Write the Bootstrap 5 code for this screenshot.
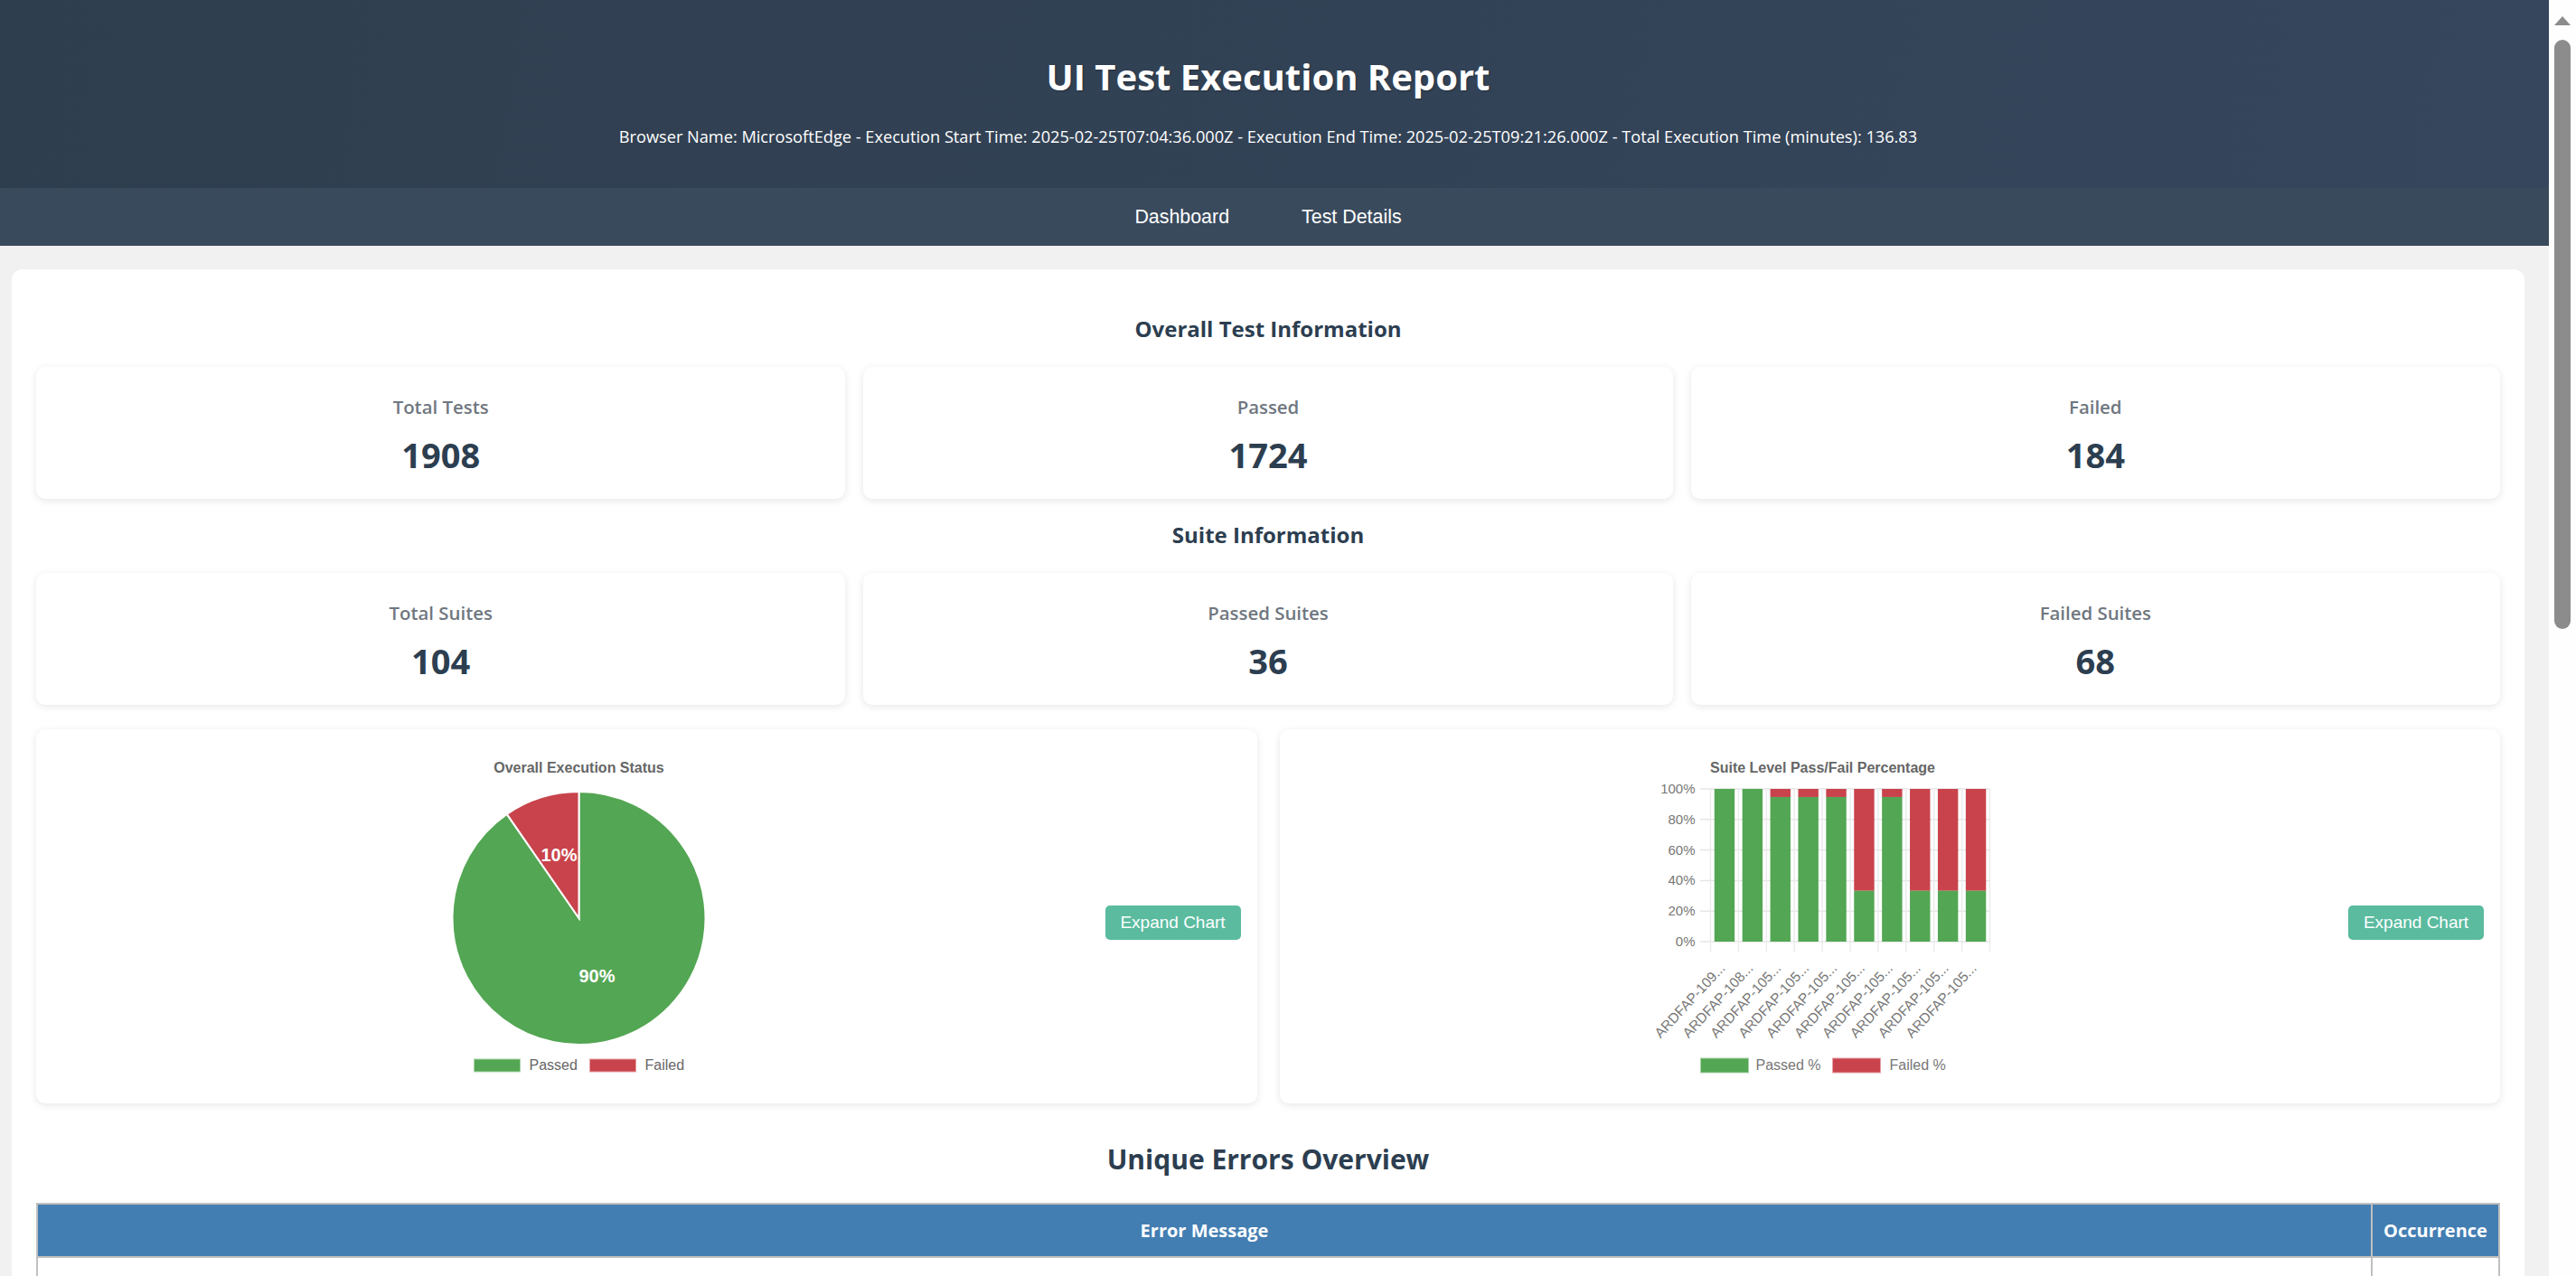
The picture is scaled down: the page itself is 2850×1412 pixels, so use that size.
<!DOCTYPE html>
<html lang="en">
<head>
    <meta charset="UTF-8">
    <meta name="viewport" content="width=device-width, initial-scale=1.0">
    <title>UI Test Execution Report</title>
    <link rel="stylesheet" href="https://cdn.jsdelivr.net/npm/bootstrap@5.3.2/dist/css/bootstrap.min.css">
    <style>
        body {
            background: #f1f1f1;
            font-family: "Open Sans", "Liberation Sans", sans-serif;
            color: #2c3e50;
        }

        .report-head {
            background: linear-gradient(100deg, #2f3e4e, #35465d);
            height: 208px;
            padding: 60px 14px 0 0;
            color: #fff;
        }

        .report-head h1 {
            font-size: 40px;
            font-weight: 700;
            line-height: 50px;
            margin: 0;
            text-shadow: 1px 1px 2px rgba(0, 0, 0, .3);
        }

        .report-head p {
            font-size: 18.2px;
            line-height: 26px;
            margin: 28px 0 0;
        }

        .report-nav {
            background: #394a5d;
            height: 64px;
            padding-right: 14px;
        }

        .report-nav a {
            color: #fff;
            font-family: "Liberation Sans", sans-serif;
            font-size: 21.4px;
            padding: 0 40px;
            text-decoration: none;
        }

        .panel {
            background: #fff;
            border-radius: 12px;
            margin: 26px 27px 0 13px;
            padding: 50px 27px 0;
        }

        .sec-title {
            font-size: 24px;
            font-weight: 700;
            line-height: 32px;
            margin-bottom: 26px;
            text-align: center;
        }

        .gutter-20 {
            --bs-gutter-x: 20px;
        }

        .chart-row {
            --bs-gutter-x: 25px;
            margin-top: 27px;
        }

        .stat-card {
            border: 0;
            border-radius: 10px;
            box-shadow: 0 2px 8px rgba(0, 0, 0, .1);
            padding: 30px 0 26px;
            text-align: center;
        }

        .stat-label {
            color: #6f7780;
            font-size: 20.4px;
            font-weight: 600;
            line-height: 28px;
        }

        .stat-num {
            font-size: 38px;
            font-weight: 700;
            line-height: 46px;
            margin-top: 16px;
        }

        .chart-card {
            border: 0;
            border-radius: 10px;
            box-shadow: 0 2px 8px rgba(0, 0, 0, .1);
            height: 414px;
            padding: 0 18px;
        }

        .chart-card svg {
            font-family: "Liberation Sans", sans-serif;
        }

        .expand-btn {
            background: #5abb9f;
            border: 0;
            border-radius: 5px;
            color: #fff;
            font-family: "Liberation Sans", sans-serif;
            font-size: 19px;
            height: 38px;
            margin-top: 14px;
            padding: 0;
            width: 150px;
        }

        .err-title {
            font-size: 30px;
            font-weight: 700;
            line-height: 40px;
            margin: 42px 0 28px;
            text-align: center;
        }

        .err-table th, .err-table td {
            border: 2px solid #c0c0c0;
        }

        .err-table thead th {
            background: #437eb2;
            color: #fff;
            font-size: 20px;
            font-weight: 700;
            height: 59px;
            padding: 0 10px;
            text-align: center;
            vertical-align: middle;
        }

        .err-table td {
            height: 80px;
        }

        .fake-scroll {
            background: #fefefe;
            flex: 0 0 30px;
            padding: 18px 6px 0;
        }

        .scroll-arrow {
            border-bottom: 10px solid #8c8c8c;
            border-left: 9px solid transparent;
            border-right: 9px solid transparent;
            height: 0;
            width: 18px;
        }

        .scroll-thumb {
            background: #8c8c8c;
            border-radius: 9px;
            height: 652px;
            margin-top: 16px;
        }
    </style>
</head>
<body class="d-flex vh-100 overflow-hidden m-0">
    <div class="flex-grow-1 overflow-hidden">
        <div class="report-head text-center">
            <h1>UI Test Execution Report</h1>
            <p>Browser Name: MicrosoftEdge - Execution Start Time: 2025-02-25T07:04:36.000Z - Execution End Time: 2025-02-25T09:21:26.000Z - Total Execution Time (minutes): 136.83</p>
        </div>
        <nav class="report-nav d-flex align-items-center justify-content-center">
            <a href="#">Dashboard</a>
            <a href="#">Test Details</a>
        </nav>

        <div class="panel">
            <div class="sec-title">Overall Test Information</div>
            <div class="row gutter-20">
                <div class="col-4"><div class="card stat-card"><div class="stat-label">Total Tests</div><div class="stat-num">1908</div></div></div>
                <div class="col-4"><div class="card stat-card"><div class="stat-label">Passed</div><div class="stat-num">1724</div></div></div>
                <div class="col-4"><div class="card stat-card"><div class="stat-label">Failed</div><div class="stat-num">184</div></div></div>
            </div>
            <div class="sec-title mt-4">Suite Information</div>
            <div class="row gutter-20">
                <div class="col-4"><div class="card stat-card"><div class="stat-label">Total Suites</div><div class="stat-num">104</div></div></div>
                <div class="col-4"><div class="card stat-card"><div class="stat-label">Passed Suites</div><div class="stat-num">36</div></div></div>
                <div class="col-4"><div class="card stat-card"><div class="stat-label">Failed Suites</div><div class="stat-num">68</div></div></div>
            </div>

            <div class="row chart-row">
                <div class="col-6">
                    <div class="card chart-card flex-row align-items-center">
                        <div class="flex-grow-1 d-flex justify-content-center">
                            <svg width="400" height="414" viewBox="0 0 400 414">
                                <text x="200.5" y="48" text-anchor="middle" font-size="16" font-weight="700" fill="#666">Overall Execution Status</text>
                                <path d="M200.5 209 L200.5 69 A140 140 0 1 1 120.8 93.9 Z" fill="#53a653" stroke="#fff" stroke-width="2"/>
                                <path d="M200.5 209 L120.8 93.9 A140 140 0 0 1 200.5 69 Z" fill="#c9434c" stroke="#fff" stroke-width="2"/>
                                <text x="178.5" y="146" text-anchor="middle" font-size="20" font-weight="700" fill="#fff">10%</text>
                                <text x="220.5" y="280" text-anchor="middle" font-size="20" font-weight="700" fill="#fff">90%</text>
                                <rect x="84.5" y="365" width="51" height="14" fill="#53a653" stroke="#a9d3a9"/>
                                <text x="145.5" y="377" font-size="16" fill="#666">Passed</text>
                                <rect x="212.5" y="365" width="51" height="14" fill="#c9434c" stroke="#e4a1a5"/>
                                <text x="273.5" y="377" font-size="16" fill="#666">Failed</text>
                            </svg>
                        </div>
                        <button class="btn expand-btn">Expand Chart</button>
                    </div>
                </div>
                <div class="col-6">
                    <div class="card chart-card flex-row align-items-center">
                        <div class="flex-grow-1 d-flex justify-content-center">
                            <svg id="suite-chart" width="400" height="414" viewBox="0 0 400 414"></svg>
                        </div>
                        <button class="btn expand-btn">Expand Chart</button>
                    </div>
                </div>
            </div>

            <div class="err-title">Unique Errors Overview</div>
            <table class="table err-table">
                <thead>
                    <tr><th>Error Message</th><th style="width: 141px">Occurrence</th></tr>
                </thead>
                <tbody>
                    <tr><td></td><td></td></tr>
                </tbody>
            </table>
        </div>
    </div>
    <div class="fake-scroll">
        <div class="scroll-arrow"></div>
        <div class="scroll-thumb"></div>
    </div>

    <script src="https://cdn.jsdelivr.net/npm/bootstrap@5.3.2/dist/js/bootstrap.bundle.min.js"></script>
    <script>
        // suite level stacked bars
        const suites = [
            ['ARDFAP-109...', 100], ['ARDFAP-108...', 100], ['ARDFAP-105...', 94.7], ['ARDFAP-105...', 94.7],
            ['ARDFAP-105...', 94.7], ['ARDFAP-105...', 33.3], ['ARDFAP-105...', 94.7], ['ARDFAP-105...', 33.3],
            ['ARDFAP-105...', 33.3], ['ARDFAP-105...', 33.3]
        ];
        const left = 76.5, pitch = 30.9, top100 = 66, bottom = 235, plotH = bottom - top100;
        let out = '<text x="200.5" y="48" text-anchor="middle" font-size="16" font-weight="700" fill="#666">Suite Level Pass/Fail Percentage</text>';
        for (let i = 0; i <= 5; i++) {
            const y = bottom - plotH * i / 5;
            out += `<line x1="65" x2="385.5" y1="${y}" y2="${y}" stroke="#e6e6e6" stroke-width="1.5"/>`;
            out += `<text x="59.5" y="${y + 5}" text-anchor="end" font-size="15" fill="#777">${i * 20}%</text>`;
        }
        for (let i = 0; i <= 10; i++) {
            const x = left + pitch * i;
            out += `<line x1="${x}" x2="${x}" y1="${top100}" y2="246" stroke="#ececec" stroke-width="1.5"/>`;
        }
        suites.forEach(([name, pass], i) => {
            const x = left + pitch * i + 4.25, h = plotH * pass / 100;
            out += `<rect x="${x}" y="${top100}" width="22.4" height="${plotH - h}" fill="#c9434c"/>`;
            out += `<rect x="${x}" y="${bottom - h}" width="22.4" height="${h}" fill="#53a653"/>`;
            out += `<text transform="translate(${93.5 + pitch * i} 265) rotate(-47)" text-anchor="end" font-size="15.5" fill="#777">${name}</text>`;
        });
        out += '<rect x="65.5" y="364" width="53" height="16" fill="#53a653" stroke="#a9d3a9"/><text x="126.5" y="377" font-size="16" fill="#777">Passed %</text>';
        out += '<rect x="211.5" y="364" width="53" height="16" fill="#c9434c" stroke="#e4a1a5"/><text x="274.5" y="377" font-size="16" fill="#777">Failed %</text>';
        document.getElementById('suite-chart').innerHTML = out;
    </script>
</body>
</html>
